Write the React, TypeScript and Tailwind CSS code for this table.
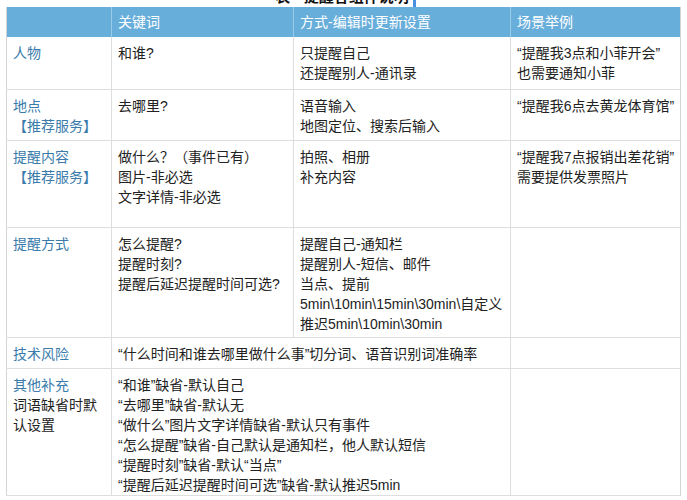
const font = {
  fontFamily: '"Liberation Sans", "Noto Sans CJK SC", sans-serif',
};

const label = "text-[#3a7bab]";
const cell = "align-top px-[6px] pt-[6px] border-b border-[#dedede]";
const sep = "border-l border-[#dedede]";
const dark = "border-l border-[#555]";
const last = "align-top pl-[6px] pr-0 pt-[6px] border-b border-[#dedede] border-l whitespace-nowrap";

function Lines({ items }: { items: string[] }) {
  return (
    <>
      {items.map((t, i) => (
        <div key={i}>{t}</div>
      ))}
    </>
  );
}

export default function App() {
  return (
    <div className="w-[687px] h-[500px] bg-white overflow-hidden text-[14px] leading-[20px] text-[#222]" style={font}>
      <div className="h-[7px] overflow-hidden flex justify-center pl-[4px]">
        <div className="-mt-[12px] font-bold text-[15px] text-[#111] flex items-end gap-1">
          <span>表 - 提醒各组件说明</span>
          <span className="w-[3px] h-[18px] bg-[#4a90e2]" />
        </div>
      </div>
      <table className="ml-[6px] w-[674px] table-fixed border-collapse border-l border-r border-[#d4d4d4]">
        <colgroup>
          <col className="w-[105px]" />
          <col className="w-[182px]" />
          <col className="w-[217px]" />
          <col className="w-[170px]" />
        </colgroup>
        <thead>
          <tr className="h-[30px] bg-[#68aedb] text-white">
            <th className="font-normal text-left px-[6px] align-middle" />
            <th className="font-normal text-left px-[6px] align-middle border-l border-[#9ccbea]">关键词</th>
            <th className="font-normal text-left px-[6px] align-middle border-l border-[#9ccbea]">方式-编辑时更新设置</th>
            <th className="font-normal text-left px-[6px] align-middle border-l border-[#9ccbea]">场景举例</th>
          </tr>
        </thead>
        <tbody>
          <tr className="h-[52px]">
            <td className={`${cell} ${label}`}>人物</td>
            <td className={`${cell} ${dark}`}>和谁?</td>
            <td className={`${cell} ${sep}`}>
              <Lines items={["只提醒自己", "还提醒别人-通讯录"]} />
            </td>
            <td className={last}>
              <Lines items={["“提醒我3点和小菲开会”", "也需要通知小菲"]} />
            </td>
          </tr>
          <tr className="h-[51px]">
            <td className={`${cell} ${label}`}>
              <Lines items={["地点", "【推荐服务】"]} />
            </td>
            <td className={`${cell} ${dark}`}>去哪里?</td>
            <td className={`${cell} ${sep}`}>
              <Lines items={["语音输入", "地图定位、搜索后输入"]} />
            </td>
            <td className={last}>“提醒我6点去黄龙体育馆”</td>
          </tr>
          <tr className="h-[87px]">
            <td className={`${cell} ${label}`}>
              <Lines items={["提醒内容", "【推荐服务】"]} />
            </td>
            <td className={`${cell} ${dark}`}>
              <Lines items={["做什么？（事件已有）", "图片-非必选", "文字详情-非必选"]} />
            </td>
            <td className={`${cell} ${sep}`}>
              <Lines items={["拍照、相册", "补充内容"]} />
            </td>
            <td className={last}>
              <Lines items={["“提醒我7点报销出差花销”", "需要提供发票照片"]} />
            </td>
          </tr>
          <tr className="h-[110px]">
            <td className={`${cell} ${label}`}>提醒方式</td>
            <td className={`${cell} ${dark}`}>
              <Lines items={["怎么提醒?", "提醒时刻?", "提醒后延迟提醒时间可选?"]} />
            </td>
            <td className={`${cell} ${sep}`}>
              <Lines
                items={[
                  "提醒自己-通知栏",
                  "提醒别人-短信、邮件",
                  "当点、提前",
                  "5min\\10min\\15min\\30min\\自定义",
                  "推迟5min\\10min\\30min",
                ]}
              />
            </td>
            <td className={last} />
          </tr>
          <tr className="h-[31px]">
            <td className={`${cell} ${label}`}>技术风险</td>
            <td colSpan={2} className={`${cell} ${dark}`}>
              “什么时间和谁去哪里做什么事”切分词、语音识别词准确率
            </td>
            <td className={last} />
          </tr>
          <tr className="h-[126px]">
            <td className={cell}>
              <div className={label}>其他补充</div>
              <div>词语缺省时默认设置</div>
            </td>
            <td colSpan={2} className={`${cell} ${dark}`}>
              <Lines
                items={[
                  "“和谁”缺省-默认自己",
                  "“去哪里”缺省-默认无",
                  "“做什么”图片文字详情缺省-默认只有事件",
                  "“怎么提醒”缺省-自己默认是通知栏，他人默认短信",
                  "“提醒时刻”缺省-默认“当点”",
                  "“提醒后延迟提醒时间可选”缺省-默认推迟5min",
                ]}
              />
            </td>
            <td className={last} />
          </tr>
        </tbody>
      </table>
    </div>
  );
}
